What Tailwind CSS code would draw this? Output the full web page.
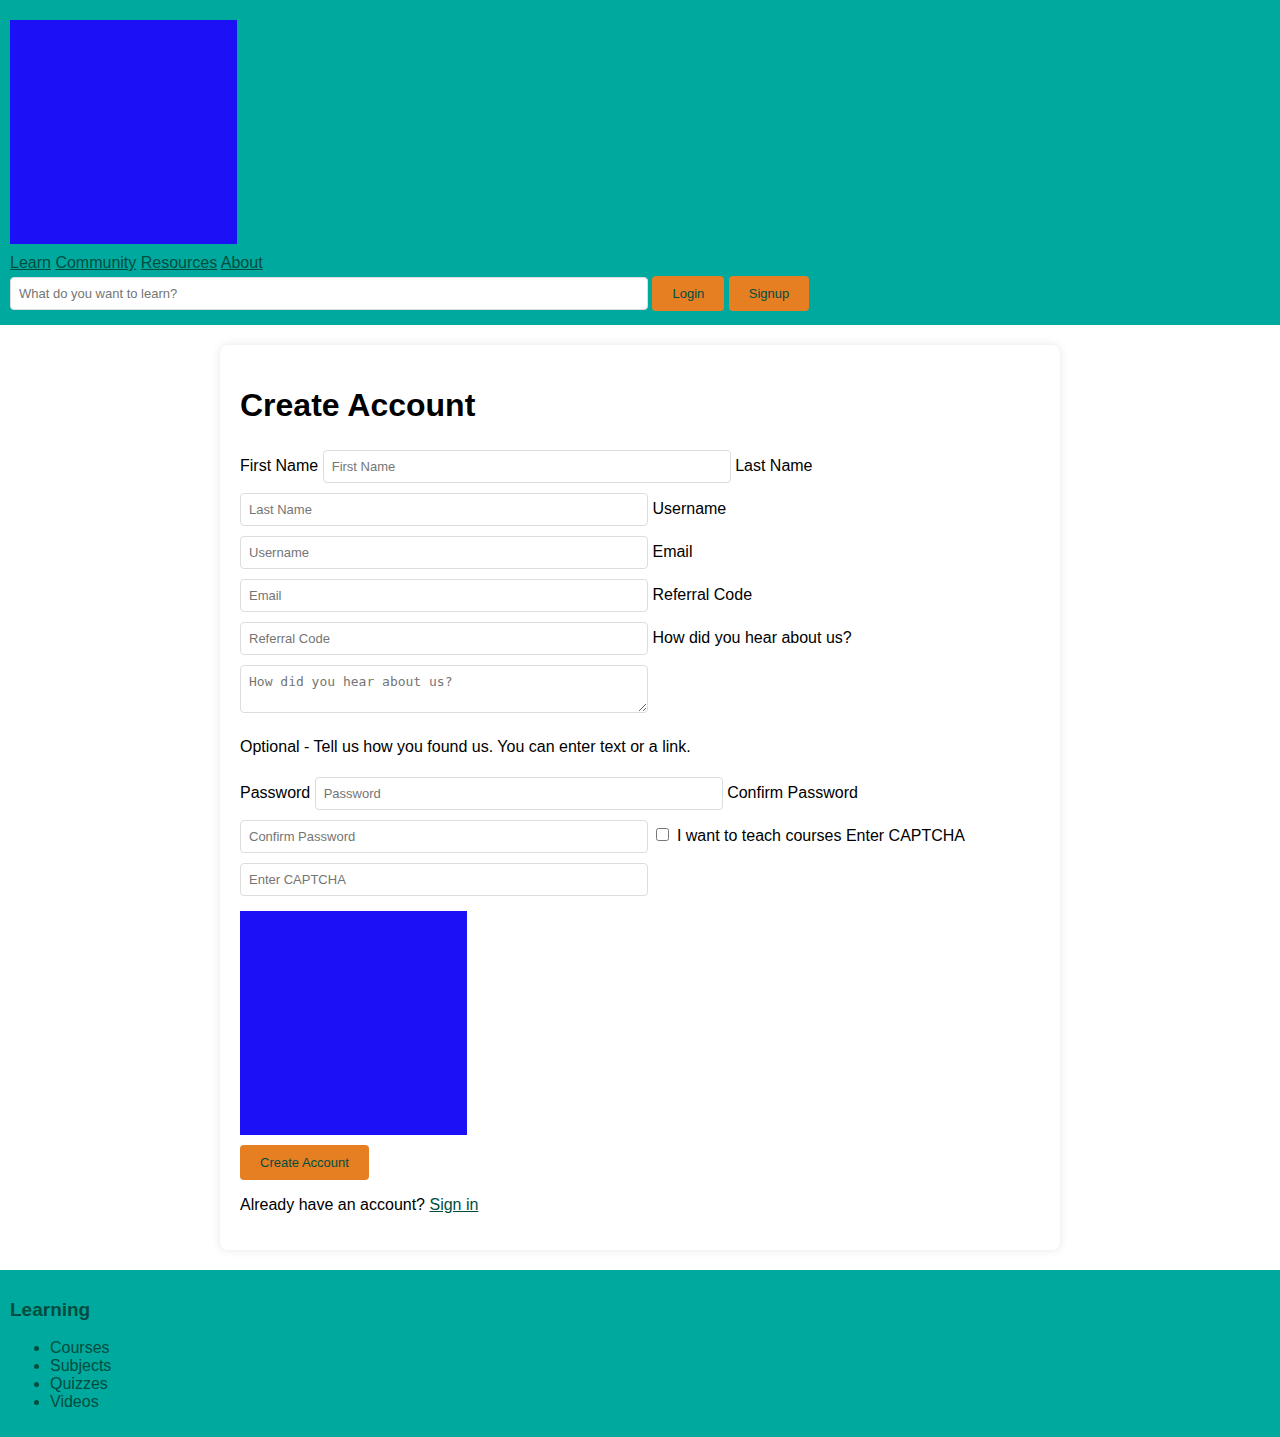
<!DOCTYPE html>
<html lang="en">
<head>
<meta charset="utf-8">
<meta name="viewport" content="width=device-width, initial-scale=1">
<title>Create Account</title>
<script src="https://cdn.jsdelivr.net/npm/@tailwindcss/browser@4"></script>
</head>
<body class="bg-white font-['Liberation_Sans',Arial,sans-serif] text-base leading-[18px] text-black">
<header class="bg-[#00a99d] p-[10px] text-[#004d40]">
  <div role="img" aria-label="Logo" class="my-[10px] h-[224px] w-[227px] bg-[#1c10f7]"></div>
  <nav>
    <a href="#" class="underline">Learn</a>
    <a href="#" class="underline">Community</a>
    <a href="#" class="underline">Resources</a>
    <a href="#" class="underline">About</a>
  </nav>
  <form>
    <input type="text" aria-label="Search" placeholder="What do you want to learn?" class="my-[5px] w-[calc(50%+8px)] rounded-sm border border-[#ddd] bg-white p-2 text-[13px] leading-[15px] placeholder:text-[#757575]">
    <button type="button" class="rounded-sm bg-[#e67e22] px-5 py-[10px] text-[13px] leading-[15px]">Login</button>
    <button type="button" class="rounded-sm bg-[#e67e22] px-5 py-[10px] text-[13px] leading-[15px]">Signup</button>
  </form>
</header>

<main class="mx-auto my-5 max-w-[840px] rounded-lg bg-white p-5 shadow-[0_0_10px_rgba(0,0,0,0.1)]">
  <h1 class="my-[21px] text-[32px] leading-[38px] font-bold">Create Account</h1>
  <form>
    <label for="first">First Name</label>
    <input id="first" type="text" placeholder="First Name" class="my-[5px] w-[calc(50%+8px)] rounded-sm border border-[#ddd] bg-white p-2 text-[13px] leading-[15px] placeholder:text-[#757575]">
    <label for="last">Last Name</label>
    <input id="last" type="text" placeholder="Last Name" class="my-[5px] w-[calc(50%+8px)] rounded-sm border border-[#ddd] bg-white p-2 text-[13px] leading-[15px] placeholder:text-[#757575]">
    <label for="user">Username</label>
    <input id="user" type="text" placeholder="Username" class="my-[5px] w-[calc(50%+8px)] rounded-sm border border-[#ddd] bg-white p-2 text-[13px] leading-[15px] placeholder:text-[#757575]">
    <label for="email">Email</label>
    <input id="email" type="email" placeholder="Email" class="my-[5px] w-[calc(50%+8px)] rounded-sm border border-[#ddd] bg-white p-2 text-[13px] leading-[15px] placeholder:text-[#757575]">
    <label for="referral">Referral Code</label>
    <input id="referral" type="text" placeholder="Referral Code" class="my-[5px] w-[calc(50%+8px)] rounded-sm border border-[#ddd] bg-white p-2 text-[13px] leading-[15px] placeholder:text-[#757575]">
    <label for="source">How did you hear about us?</label>
    <textarea id="source" rows="2" placeholder="How did you hear about us?" class="my-[5px] w-[calc(50%+8px)] rounded-sm border border-[#ddd] bg-white p-2 font-['DejaVu_Sans_Mono',monospace] text-[13px] leading-[15px] placeholder:text-[#757575]"></textarea>
    <p class="my-4">Optional - Tell us how you found us. You can enter text or a link.</p>
    <label for="password">Password</label>
    <input id="password" type="password" placeholder="Password" class="my-[5px] w-[calc(50%+8px)] rounded-sm border border-[#ddd] bg-white p-2 text-[13px] leading-[15px] placeholder:text-[#757575]">
    <label for="confirm">Confirm Password</label>
    <input id="confirm" type="password" placeholder="Confirm Password" class="my-[5px] w-[calc(50%+8px)] rounded-sm border border-[#ddd] bg-white p-2 text-[13px] leading-[15px] placeholder:text-[#757575]">
    <input id="teach" type="checkbox" class="mr-[3px] ml-1 size-[13px]">
    <label for="teach">I want to teach courses</label>
    <label for="captcha">Enter CAPTCHA</label>
    <input id="captcha" type="text" placeholder="Enter CAPTCHA" class="my-[5px] w-[calc(50%+8px)] rounded-sm border border-[#ddd] bg-white p-2 text-[13px] leading-[15px] placeholder:text-[#757575]">
    <div role="img" aria-label="CAPTCHA" class="my-[10px] h-[224px] w-[227px] bg-[#1c10f7]"></div>
    <button type="button" class="rounded-sm bg-[#e67e22] px-5 py-[10px] text-[13px] leading-[15px] text-[#004d40]">Create Account</button>
  </form>
  <p class="my-4">Already have an account? <a href="#" class="text-[#004d40] underline">Sign in</a></p>
</main>

<footer class="bg-[#00a99d] p-[10px] text-[#004d40]">
  <h3 class="my-[19px] text-[19px] leading-[21px] font-bold">Learning</h3>
  <ul class="my-4 list-disc pl-10">
    <li>Courses</li>
    <li>Subjects</li>
    <li>Quizzes</li>
    <li>Videos</li>
  </ul>
</footer>
</body>
</html>
